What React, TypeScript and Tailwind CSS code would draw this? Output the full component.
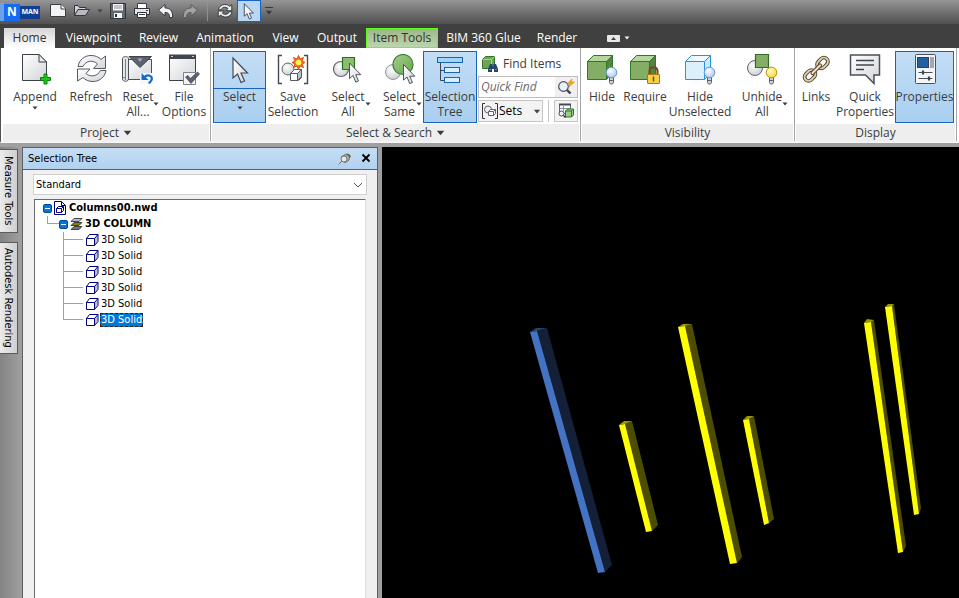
import React, { useState } from 'react';
import clsx from 'clsx';

const CURSOR = 'M0 0 V20 L4.5 16 L8 24.5 L11.5 23 L8 15 H14.5 Z';

const Caret = ({ className }: { className?: string }) => (
  <svg viewBox="0 0 6 4" className={clsx('shrink-0', className ?? 'h-1 w-1.5')} aria-hidden="true">
    <path d="M0.500 0.500h5L3 3.500z" fill="currentColor" />
  </svg>
);

const Icon = ({ children }: { children: React.ReactNode }) => (
  <svg viewBox="0 0 32 32" className="h-8 w-8 shrink-0" fill="none" aria-hidden="true">
    <defs>
      <linearGradient id="paper" x1="0" y1="0" x2="1" y2="1">
        <stop offset="0" stopColor="#ffffff" />
        <stop offset="1" stopColor="#d2d4d8" />
      </linearGradient>
      <radialGradient id="ball" cx="0.4" cy="0.35" r="0.7">
        <stop offset="0" stopColor="#ffffff" />
        <stop offset="1" stopColor="#c8ccd1" />
      </radialGradient>
      <radialGradient id="blueBulb" cx="0.4" cy="0.35" r="0.7">
        <stop offset="0" stopColor="#ffffff" />
        <stop offset="1" stopColor="#a3c6f5" />
      </radialGradient>
      <radialGradient id="yellowBulb" cx="0.4" cy="0.35" r="0.7">
        <stop offset="0" stopColor="#ffffc8" />
        <stop offset="1" stopColor="#ffd52a" />
      </radialGradient>
      <linearGradient id="green" x1="0" y1="0" x2="1" y2="1">
        <stop offset="0" stopColor="#a4d08a" />
        <stop offset="1" stopColor="#6ba452" />
      </linearGradient>
    </defs>
    {children}
  </svg>
);

const AppendIcon = () => (
  <Icon>
    <path d="M3.500 0.500H20L27.500 8V26.500H3.500Z" fill="url(#paper)" stroke="#3c4048" />
    <path d="M20 0.500V8H27.500Z" fill="#e9eaec" stroke="#3c4048" />
    <path d="M25 20h3v3.500h3.500v3H28V30h-3v-3.500h-3.500v-3H25z" fill="#1fc41f" stroke="#078007" />
  </Icon>
);

const RefreshArrows = () => (
  <>
    <path d="M3 12.500C4 6 9.500 1.500 16 1.500c4.500 0 7.500 1.500 10 4L30.500 2v12.500H18.500L22.500 10C18 5.500 11 6.500 8 12.500Z" />
    <path d="M31 16.500c-1 6.500-6.500 11-13 11-4.500 0-7.500-1.500-10-4L2.500 27V15H15l-4 4.500c4.500 4 11.500 3 14.500-3Z" />
  </>
);

const RefreshIcon = () => (
  <Icon>
    <g fill="url(#paper)" stroke="#555a63" strokeLinejoin="round"><RefreshArrows /></g>
  </Icon>
);

const ResetIcon = () => (
  <Icon>
    <path d="M5.500 5.500H29.500V25.500H5.500Z" fill="url(#paper)" stroke="#4a4f58" />
    <path d="M0.500 4.500C0.500 2 6.500 2 6.500 4.500V25C6.500 28 0.500 28 0.500 25Z" fill="#e4e6e9" stroke="#4a4f58" />
    <path d="M3.500 5V26M0.500 25c0-2 3-2 3 0" stroke="#777c85" />
    <path d="M7 2.500H29.500L18 13.500Z" fill="#5b616e" stroke="#3d424d" />
    <path d="M15.500 4.500h5L18 8z" fill="#a5a9b2" />
    <path d="M18 19h13v11H18z" fill="#f6f7f8" />
    <path d="M22 23.500c4-4 9-1.500 7.500 2.500-.5 1.500-1.500 2.500-3 3" stroke="#1769c9" strokeWidth="2.200" />
    <path d="M19.500 19v7H26.500Z" fill="#1769c9" />
  </Icon>
);

const FileOptionsIcon = () => (
  <Icon>
    <path d="M1.500 1.500H27.500V26.500H1.500Z" fill="url(#paper)" stroke="#3c4048" />
    <path d="M1 0.500H28V5H1Z" fill="#3f444e" />
    <path d="M3 2.500h2M24 2.500h2" stroke="#c9ccd2" />
    <path d="M15.500 18.500H27.500V30.500H15.500Z" fill="#f3f4f5" stroke="#7d828b" />
    <path d="M17.500 23l2.500-1.500 2.500 3L29.500 18l2 2L23 29.500Z" fill="#5b6270" stroke="#3d424d" strokeWidth="0.700" />
  </Icon>
);

const Pointer = ({ x, y, scale = 1 }: { x: number; y: number; scale?: number }) => (
  <path d={CURSOR} transform={`translate(${x} ${y}) scale(${scale})`} fill="url(#paper)" stroke="#454a55" strokeWidth="1.200" />
);

const SelectIcon = () => (
  <Icon><Pointer x={9} y={4} /></Icon>
);

const SaveSelectionIcon = () => (
  <Icon>
    <path d="M5 1.500H1.500V29.500H5M27 1.500H30.500V29.500H27" stroke="#454a55" strokeWidth="1.400" />
    <circle cx="11" cy="15" r="6" fill="url(#ball)" stroke="#60656f" />
    <path d="M13.500 19.500l4-4H24.500V23.500l-3 3H13.500Z" fill="#fff" stroke="#555a64" strokeLinejoin="round" />
    <path d="M20.500 19.500V26.500l4-4v-7Z" fill="#bfc3c9" stroke="#555a64" />
    <path d="M13.500 19.500h7l4-4" stroke="#555a64" />
    <path d="M21.500 1.500l1.500 3.500 3.500-1.500-1.500 3.500 3 1.500-3 1.500 1.500 3.500-3.500-1.500-1.500 3.500-1.500-3.500-3.500 1.500 1.500-3.500-3-1.500 3-1.500-1.500-3.500L20 5z" fill="#f4771b" stroke="#df4b12" />
    <circle cx="21.500" cy="8.500" r="2.800" fill="#fff45b" />
  </Icon>
);

const SelectAllIcon = () => (
  <Icon>
    <circle cx="9" cy="15" r="7.500" fill="url(#ball)" stroke="#60656f" strokeWidth="1.200" />
    <path d="M10.500 3.500H22.500V15.500H10.500Z" fill="#8bbd70" stroke="#2f6d23" strokeWidth="1.200" />
    <Pointer x={17.500} y={9} scale={0.78} />
  </Icon>
);

const SelectSameIcon = () => (
  <Icon>
    <circle cx="9" cy="18" r="7.500" fill="url(#ball)" stroke="#9297a0" />
    <circle cx="19" cy="10.500" r="10" fill="url(#green)" stroke="#3d8231" strokeWidth="1.200" />
    <Pointer x={19.500} y={10.500} scale={0.78} />
  </Icon>
);

const SelectionTreeIcon = () => (
  <Icon>
    <path d="M6.500 9V26.500H10M6.500 16.500H10" stroke="#3f444e" />
    <rect x="3.500" y="3.500" width="25" height="5" fill="#a4d4f4" stroke="#1667b0" />
    <rect x="10.500" y="13.500" width="15" height="5" fill="#d9eefb" stroke="#1667b0" />
    <rect x="10.500" y="23.500" width="15" height="5" fill="#d9eefb" stroke="#1667b0" />
  </Icon>
);

const Cube = ({ front, top, side, line }: { front: string; top: string; side: string; line: string }) => (
  <g stroke={line} strokeLinejoin="round">
    <path d="M1.500 7.500L7.500 1.500H26.500L20.500 7.500Z" fill={top} />
    <path d="M20.500 7.500L26.500 1.500V19.500L20.500 25.500Z" fill={side} />
    <path d="M1.500 7.500H20.500V25.500H1.500Z" fill={front} />
  </g>
);

const GreenCube = () => <Cube front="#84ae66" top="#b5d69f" side="#568343" line="#2c7a22" />;

const Bulb = ({ yellow }: { yellow?: boolean }) => (
  <g>
    <path d="M23.500 23h4v5.500l-1 1.500h-2l-1-1.500Z" fill="#d2d5da" stroke="#5c616b" />
    <path d="M23.500 26.500h4" stroke="#5c616b" />
    <circle cx="25.500" cy="18.500" r="5.300" fill={yellow ? 'url(#yellowBulb)' : 'url(#blueBulb)'} stroke={yellow ? '#b58a16' : '#6a8fc9'} />
  </g>
);

const HideIcon = () => (
  <Icon><GreenCube /><Bulb /></Icon>
);

const RequireIcon = () => (
  <Icon>
    <GreenCube />
    <path d="M20.500 21V17c0-5 8-5 8 0v4" stroke="#7a4a1c" strokeWidth="2.200" />
    <rect x="18.500" y="20.500" width="12" height="9" rx="0.500" fill="#f8cf49" stroke="#a67c0d" />
    <path d="M24.500 22.500v5" stroke="#6d4e0a" strokeWidth="1.500" />
  </Icon>
);

const HideUnselectedIcon = () => (
  <Icon>
    <Cube front="#dcf0fc" top="#f0f9ff" side="#cbe8fa" line="#2496dc" />
    <Bulb />
  </Icon>
);

const UnhideIcon = () => (
  <Icon>
    <circle cx="9" cy="14" r="7.500" fill="url(#ball)" stroke="#60656f" />
    <path d="M9.500 0.500H22.500V13.500H9.500Z" fill="#84ae66" stroke="#2f6d23" strokeWidth="1.200" />
    <Bulb yellow />
  </Icon>
);

const LinksIcon = () => (
  <Icon>
    {['translate(22.500 9)', 'translate(10 21.500)'].map((place) => (
      <g key={place} transform={`${place} rotate(-45)`}>
        <rect x="-6" y="-4" width="12" height="8" rx="4" stroke="#4f4638" strokeWidth="3.800" />
        <rect x="-6" y="-4" width="12" height="8" rx="4" stroke="#e3d0a8" strokeWidth="1.900" />
      </g>
    ))}
    <path d="M12.500 19l7.500-7.500" stroke="#4f4638" strokeWidth="4.200" strokeLinecap="round" />
    <path d="M12.500 19l7.500-7.500" stroke="#f0dfba" strokeWidth="2.200" strokeLinecap="round" />
  </Icon>
);

const QuickPropertiesIcon = () => (
  <Icon>
    <path d="M1.500 1H30.500V21H25V29.500L16.500 21H1.500Z" fill="url(#paper)" stroke="#4a5059" strokeWidth="1.500" />
    <path d="M7 6.500H25M7 11H25M7 15.500H15" stroke="#3f444e" strokeWidth="1.300" />
  </Icon>
);

const PropertiesIcon = () => (
  <Icon>
    <rect x="6.500" y="0.500" width="20" height="29" rx="1" fill="#f4f5f6" stroke="#4a4f58" />
    <rect x="8.500" y="3.500" width="11" height="10" fill="#235fa3" stroke="#313f55" />
    <path d="M21 3h4v11h-4z" fill="#a3a8b0" />
    <path d="M9.500 18.500h14M9.500 24.500h14" stroke="#4a4f58" strokeWidth="1.200" />
    <path d="M14 16.500v4M20 22.500v4" stroke="#3d424d" strokeWidth="2.200" />
  </Icon>
);

type RibbonButtonProps = {
  icon: React.ReactNode;
  label: string;
  className: string;
  active?: boolean;
  split?: boolean;
  sideCaret?: boolean;
  caret?: boolean;
};

const RibbonButton = ({ icon, label, className, active, split, sideCaret, caret }: RibbonButtonProps) => (
  <button
    type="button"
    className={clsx(
      'flex h-[72px] shrink-0 flex-col items-center border pt-0.5',
      active ? 'border-[#1464c0] bg-linear-to-b from-[#c3ddf5] to-[#a9cff0]' : 'border-transparent',
      className,
    )}
  >
    {icon}
    {split && <span className="mt-0.5 h-px w-full bg-[#1464c0]" />}
    <span className={clsx('flex items-center', !split && 'mt-[3px]')}>
      <span className="whitespace-pre text-center leading-[15px]">{label}</span>
      {sideCaret && <Caret className="-mr-1.5 h-1 w-1.5" />}
    </span>
    {caret && <Caret className="mt-0.5 h-1 w-1.5" />}
  </button>
);

const RibbonGroup = ({ title, menu, className, children }: { title: string; menu?: boolean; className: string; children: React.ReactNode }) => (
  <section className="flex shrink-0 flex-col border-r border-[#a5a5a5]" aria-label={title}>
    <div className={clsx('flex h-[76px] pt-[3px]', className)}>{children}</div>
    <div className="mx-px flex h-[17px] items-center justify-center gap-1 bg-[#eeeeee]">
      <span>{title}</span>
      {menu && <Caret className="h-1.5 w-[9px]" />}
    </div>
  </section>
);

const FindItemsIcon = () => (
  <svg viewBox="0 0 16 16" className="h-4 w-4" aria-hidden="true">
    <path d="M0.500 3.500l3-3h9v9l-3 3h-9z" fill="#6fa355" stroke="#2c7a22" />
    <path d="M0.500 3.500h9l3-3M9.500 3.500v9" fill="none" stroke="#a9d092" />
    <path d="M8 8h2.500v2h1V8H14l2 5v3h-4v-3h-2v3H6v-3z" fill="#24456e" />
    <path d="M7.500 13.500h1M13.500 13.500h1" stroke="#9cc4ec" />
  </svg>
);

const QuickFindIcon = () => (
  <svg viewBox="0 0 18 18" className="h-[18px] w-[18px]" fill="none" aria-hidden="true">
    <circle cx="6.500" cy="8.500" r="4.800" fill="#e9f1f8" stroke="#4a4f58" strokeWidth="1.200" />
    <path d="M10 12l3.500 3.500" stroke="#3d424d" strokeWidth="2.400" />
    <path d="M15 1L10.500 5.500h2.500l-1 3.500 5.500-5h-3z" fill="#f7a51c" stroke="#e08a10" strokeWidth="0.600" />
  </svg>
);

const SetsIcon = () => (
  <svg viewBox="0 0 16 16" className="h-4 w-4" fill="none" aria-hidden="true">
    <path d="M3 0.500H0.500v15H3M13 0.500h2.500v15H13" stroke="#30353e" />
    <circle cx="6" cy="6.500" r="3.500" fill="#eceef0" stroke="#60656f" />
    <path d="M6.500 8.500l2-2h5v4l-2 2h-5z" fill="#fff" stroke="#60656f" />
    <path d="M6.500 8.500h5l2-2M11.500 8.500v4" stroke="#60656f" />
  </svg>
);

const InspectorIcon = () => (
  <svg viewBox="0 0 16 16" className="h-4 w-4" fill="none" aria-hidden="true">
    <path d="M1.500 1.500h11v9h-11z" fill="#fff" stroke="#60656f" />
    <path d="M1 0.500h12v2H1z" fill="#454a55" />
    <path d="M2 5.500h11M5.500 3v5" stroke="#8a8f98" />
    <path d="M7.500 8l2-2h6v6l-2 2h-6z" fill="#9ccc84" stroke="#2c7a22" />
    <path d="M7.500 8h6l2-2M13.500 8v6" stroke="#2c7a22" />
    <circle cx="3.500" cy="10.500" r="2.500" fill="#eef2f6" stroke="#454a55" />
    <path d="M5.500 12.500l2 2" stroke="#30353e" strokeWidth="1.500" />
  </svg>
);

const QuickIcon = ({ label, className, children }: { label: string; className?: string; children: React.ReactNode }) => (
  <button type="button" aria-label={label} className={clsx('flex shrink-0 justify-center', className)}>
    <svg viewBox="0 0 16 16" className="h-4 w-4" fill="none" aria-hidden="true">{children}</svg>
  </button>
);

const TitleBar = () => (
  <header className="flex h-6 items-start bg-linear-to-b from-[#969696] to-[#505050] pt-[3px]">
    <button type="button" className="flex h-[18px] w-10 shrink-0 items-center border-l-4 border-[#6d9fea] text-white" aria-label="Application menu">
      <span className="flex h-[17px] w-4 items-center justify-center bg-[#176bf2] text-[12px] font-bold">N</span>
      <span className="flex h-[13px] w-5 items-center justify-center bg-[#123f93] text-[7px] font-bold">MAN</span>
    </button>
    <div className="ml-2.5 flex items-start">
      <QuickIcon label="New">
        <path d="M0.500 1.500H11L15.500 6V13.500H0.500Z" fill="#f2f3f4" stroke="#3a3d42" />
        <path d="M11 1.500V6h4.500" fill="#fff" stroke="#3a3d42" />
      </QuickIcon>
      <QuickIcon label="Open" className="ml-2">
        <path d="M0.500 12.500V2.500H4l1.500 2H12V6.500" fill="#cfd1d4" stroke="#32353a" />
        <path d="M0.500 12.500L4 6.500H15.500L11.500 12.500Z" fill="#b7babe" stroke="#32353a" />
      </QuickIcon>
      <button type="button" aria-label="Open options" className="mx-1 flex h-4 w-3 items-center justify-center text-[#3e3e3e]"><Caret /></button>
      <QuickIcon label="Save">
        <path d="M0.500 0.500H15.500V15.500H0.500Z" fill="#61666f" stroke="#2f333a" />
        <path d="M3 1h10v6.500H3zM4 10h8v5H4z" fill="#f4f5f6" />
        <path d="M4 3h8M4 5h8" stroke="#8c9199" />
        <path d="M5 11h2v3H5z" fill="#2f333a" />
      </QuickIcon>
      <QuickIcon label="Print" className="ml-2">
        <path d="M3.500 0.500h9v5h-9z" fill="#fff" stroke="#3a3d42" />
        <path d="M0.500 5.500h15v6h-15z" fill="#e4e6e8" stroke="#2f333a" />
        <path d="M3.500 9.500h9v5h-9z" fill="#fff" stroke="#2f333a" />
        <path d="M5 11.500h6M12 7.500h2" stroke="#3a3d42" />
      </QuickIcon>
      <QuickIcon label="Undo" className="ml-2">
        <path d="M7 1.500V5C12 5 15 7.500 14.500 14.500H11.500C11.500 10.500 10 9.500 7 9.500V13L0.500 7.200Z" fill="#f1f2f3" stroke="#34373c" />
      </QuickIcon>
      <QuickIcon label="Redo" className="ml-2">
        <path d="M9 1.500V5C4 5 1 7.500 1.500 14.500H4.500C4.500 10.500 6 9.500 9 9.500V13L15.500 7.200Z" fill="#a2a2a2" stroke="#5b5b5b" />
      </QuickIcon>
      <span className="mx-[9px] h-[18px] w-px bg-[#909090]" />
      <button type="button" aria-label="Refresh" className="flex h-4 w-4 shrink-0">
        <svg viewBox="0 0 33 30" className="h-4 w-4" aria-hidden="true">
          <g strokeWidth="2" fill="#eee" stroke="#34373c"><RefreshArrows /></g>
        </svg>
      </button>
      <button type="button" aria-label="Select" className="-mt-[3px] ml-1 flex h-[22px] w-6 items-center justify-center border border-[#1464c0] bg-[#b7d7f3]">
        <svg viewBox="-1 -1 17 27" className="h-[17px] w-3" aria-hidden="true"><path d={CURSOR} fill="#f4f5f6" stroke="#454a55" strokeWidth="1.500" /></svg>
      </button>
      <button type="button" aria-label="Customize" className="ml-1 mt-1 flex flex-col items-center gap-0.5 text-[#383838]">
        <span className="h-px w-2 bg-current" />
        <Caret className="h-[5px] w-2" />
      </button>
    </div>
  </header>
);

const tabs = [
  { label: 'Home', width: 'w-[51px] mr-0.5' },
  { label: 'Viewpoint', width: 'w-[73px]' },
  { label: 'Review', width: 'w-[57px]' },
  { label: 'Animation', width: 'w-[76px]' },
  { label: 'View', width: 'w-[45px]' },
  { label: 'Output', width: 'w-[58px]' },
  { label: 'Item Tools', width: 'w-[72px]' },
  { label: 'BIM 360 Glue', width: 'w-[91px]' },
  { label: 'Render', width: 'w-[56px]' },
];

const TabBar = () => {
  const [current, setCurrent] = useState('Home');

  return (
    <nav className="flex h-6 items-end bg-[#404040] pl-1">
      {tabs.map(({ label, width }) => (
        <button
          key={label}
          type="button"
          onClick={() => setCurrent(label)}
          className={clsx(
            'flex h-5 shrink-0 items-center justify-center whitespace-nowrap',
            width,
            label === 'Item Tools'
              ? 'border border-[#5fff1a] bg-linear-to-b from-[#9db78c] to-[#b9d6ac] text-[#333]'
              : current === label
                ? 'bg-linear-to-b from-[#d6d6d6] to-white text-[#333]'
                : 'text-white',
          )}
        >
          {label}
        </button>
      ))}
      <button type="button" aria-label="Minimize ribbon" className="ml-[22px] flex h-5 items-center gap-1 text-[#f0f0f0]">
        <svg viewBox="0 0 13 7" className="h-[7px] w-[13px]" aria-hidden="true">
          <rect width="13" height="7" rx="1" fill="#e8e8e8" />
          <path d="M4 5h5L6.500 2z" fill="#404040" />
        </svg>
        <Caret />
      </button>
    </nav>
  );
};

const Ribbon = () => (
  <div className="flex h-[95px] shrink-0 overflow-hidden border-b-2 border-l border-[#f4f4f4] border-l-[#505050] bg-white pl-px">
    <RibbonGroup title="Project" menu className="pr-1">
      <RibbonButton className="w-[66px]" icon={<AppendIcon />} label="Append" caret />
      <RibbonButton className="w-[46px]" icon={<RefreshIcon />} label="Refresh" />
      <RibbonButton className="w-12" icon={<ResetIcon />} label={'Reset\nAll...'} sideCaret />
      <RibbonButton className="w-11" icon={<FileOptionsIcon />} label={'File\nOptions'} />
    </RibbonGroup>

    <RibbonGroup title="Select & Search" menu className="px-0.5">
      <RibbonButton className="w-[53px]" icon={<SelectIcon />} label="Select" active split caret />
      <RibbonButton className="w-[54px]" icon={<SaveSelectionIcon />} label={'Save\nSelection'} />
      <RibbonButton className="w-14" icon={<SelectAllIcon />} label={'Select\nAll'} sideCaret />
      <RibbonButton className="w-[47px]" icon={<SelectSameIcon />} label={'Select\nSame'} sideCaret />
      <RibbonButton className="w-[54px]" icon={<SelectionTreeIcon />} label={'Selection\nTree'} active />
      <div className="ml-px flex w-[100px] flex-col">
        <button type="button" className="flex h-[25px] items-center gap-[5px] pl-1">
          <FindItemsIcon />
          <span className="whitespace-nowrap">Find Items</span>
        </button>
        <div className="flex h-[22px] items-center border border-[#bdbdbd] bg-white">
          <input aria-label="Quick Find" placeholder="Quick Find" className="w-0 flex-1 pl-0.5 font-medium italic outline-none placeholder:text-[#6a6a6a]" />
          <button type="button" aria-label="Find" className="flex h-full w-[22px] items-center justify-center bg-[#f0f0f0]"><QuickFindIcon /></button>
        </div>
        <div className="mt-[2px] flex h-[22px] items-stretch justify-between">
          <button type="button" className="flex w-[65px] items-center border border-[#c6c6c6] bg-[#f3f3f3] pl-[3px] text-black">
            <SetsIcon />
            <span className="flex-1 pl-px text-left">Sets</span>
            <Caret className="mr-px h-[5px] w-2 text-[#444]" />
          </button>
          <span className="w-px bg-[#c6c6c6]" />
          <button type="button" aria-label="Selection Inspector" className="flex w-6 items-center justify-center border border-[#c6c6c6] bg-[#f3f3f3]"><InspectorIcon /></button>
        </div>
      </div>
    </RibbonGroup>

    <RibbonGroup title="Visibility" className="pr-[3px]">
      <RibbonButton className="w-[42px]" icon={<HideIcon />} label="Hide" />
      <RibbonButton className="w-11" icon={<RequireIcon />} label="Require" />
      <RibbonButton className="w-[66px]" icon={<HideUnselectedIcon />} label={'Hide\nUnselected'} />
      <RibbonButton className="w-[58px]" icon={<UnhideIcon />} label={'Unhide\nAll'} sideCaret />
    </RibbonGroup>

    <RibbonGroup title="Display" className="pr-0.5">
      <RibbonButton className="w-[42px]" icon={<LinksIcon />} label="Links" />
      <RibbonButton className="mr-0.5 w-14" icon={<QuickPropertiesIcon />} label={'Quick\nProperties'} />
      <RibbonButton className="w-[59px]" icon={<PropertiesIcon />} label="Properties" active />
    </RibbonGroup>
  </div>
);

const SolidIcon = () => (
  <svg viewBox="0 0 13 12" className="h-3 w-[13px]" fill="none" aria-hidden="true">
    <path d="M8.500 4.500l3-4v7l-3 4z" fill="#c0c0c0" />
    <path d="M0.500 4.500l3-4h8.500v7l-3.500 4h-8zM0.500 4.500h8v7M8.500 4.500l3.500-4" stroke="#000080" />
  </svg>
);

const Expander = () => (
  <button type="button" aria-label="Collapse" className="flex h-[9px] w-[9px] items-center justify-center rounded-xs border border-[#064a8c] bg-[#0078d7]">
    <span className="h-px w-[5px] bg-white" />
  </button>
);

const SelectionTree = () => {
  const [selected, setSelected] = useState(5);

  return (
    <ul>
      <li className="flex h-4 items-center pl-2 font-bold">
        <Expander />
        <svg viewBox="0 0 12 14" className="ml-0.5 h-3.5 w-3" fill="none" aria-hidden="true">
          <path d="M0.500 0.500h7l4 4v9h-11z" fill="#fff" stroke="#000080" />
          <path d="M7.500 0.500v4h4M2.500 7.500l2-2h5v4l-2 2h-5zM2.500 7.500h5v4M7.500 7.500l2-2" stroke="#000080" />
        </svg>
        <span className="ml-[3px]">Columns00.nwd</span>
      </li>
      <li className="flex h-4 items-center pl-3 font-bold">
        <span className="h-2 w-3 self-start border-b border-l border-[#a0a0a0]" />
        <Expander />
        <svg viewBox="0 0 13 12" className="ml-0.5 h-3 w-[13px]" aria-hidden="true">
          <g stroke="#222" strokeWidth="0.800">
            <path d="M1 11.500l3-3h8l-3 3z" fill="#777" />
            <path d="M1 7.500l3-3h8l-3 3z" fill="#808000" />
            <path d="M1 3.500l3-3h8l-3 3z" fill="#b5b8d6" />
          </g>
        </svg>
        <span className="ml-0.5">3D COLUMN</span>
      </li>
      {[0, 1, 2, 3, 4, 5].map((n) => (
        <li key={n} className="flex h-4 items-center pl-7">
          <span className={clsx('h-4 w-5 border-[#a0a0a0]', n < 5 && 'border-l')}>
            <span className={clsx('block h-2 border-b border-[#a0a0a0]', n === 5 && 'border-l')} />
          </span>
          <button type="button" onClick={() => setSelected(n)} className="ml-[3px] flex items-center gap-px whitespace-nowrap">
            <SolidIcon />
            <span className={clsx('h-[14px] border border-dashed leading-[12px]', selected === n ? 'border-[#402010] bg-[#0078d7] text-white' : 'border-transparent')}>3D Solid</span>
          </button>
        </li>
      ))}
    </ul>
  );
};

const TreePanel = () => (
  <aside className="flex w-[356px] shrink-0 flex-col border border-b-0 border-[#5e6064] bg-[#f0f0f0] font-['DejaVu_Sans_Condensed','DejaVu_Sans',sans-serif] text-[11px] text-black">
    <div className="flex h-[22px] shrink-0 items-center border-b border-[#5e6064] bg-linear-to-b from-[#c5def5] to-[#b1d1f0] pl-[5px] pr-1.5">
      <h2 className="flex-1 pt-0.5">Selection Tree</h2>
      <button type="button" aria-label="Auto hide">
        <svg viewBox="0 0 13 12" className="h-3 w-[13px]" fill="none" aria-hidden="true">
          <path d="M0.500 11.500l4-4" stroke="#777" />
          <path d="M3 4l5-3 4 1-1 5-4 3z" fill="#a9a9a9" stroke="#777" />
          <circle cx="6" cy="6" r="3" fill="#e6e6e6" stroke="#777" />
          <path d="M9 1l3.500 3" stroke="#5c5c5c" strokeWidth="1.500" />
        </svg>
      </button>
      <button type="button" aria-label="Close" className="ml-2.5 pb-px">
        <svg viewBox="0 0 10 10" className="block h-2.5 w-2.5" aria-hidden="true"><path d="M1.500 1.500l7 7M8.500 1.500l-7 7" stroke="#000" strokeWidth="1.800" /></svg>
      </button>
    </div>
    <div className="relative mx-2.5 mt-1">
      <select aria-label="Tree view" defaultValue="Standard" className="block h-[21px] w-full appearance-none border border-[#cfcfcf] bg-white pl-0.5 pt-px outline-none">
        <option>Standard</option>
        <option>Compact</option>
        <option>Properties</option>
        <option>Sets</option>
      </select>
      <svg viewBox="0 0 10 6" className="pointer-events-none absolute right-1 top-2 h-1.5 w-2.5" fill="none" aria-hidden="true"><path d="M1 1l4 4 4-4" stroke="#555" /></svg>
    </div>
    <div className="mx-[11px] mt-1 flex-1 border border-b-0 border-[#dcdcdc] border-l-[#6a6a6a] border-t-[#6a6a6a] bg-white">
      <SelectionTree />
    </div>
  </aside>
);

const columns = [
  { front: '530,332 537,331 605,572 598,573', side: '537,331 547,328 612,565 605,572', top: '530,332 536,328 547,328 537,331', colors: ['#4573c4', '#141f38', '#26406f'] },
  { front: '619,425 625,424 652,531 646,532', side: '625,424 632,421 658,525 652,531', top: '619,425 624,421 632,421 625,424', colors: ['#ffff00', '#4d4d00', '#999900'] },
  { front: '678,327 685,326 737,563 730,564', side: '685,326 692,324 742,557 737,563', top: '678,327 683,324 692,324 685,326', colors: ['#ffff00', '#4d4d00', '#999900'] },
  { front: '743,420 749,419 769,523 764,525', side: '749,419 754,416 774,519 769,523', top: '743,420 747,416 754,416 749,419', colors: ['#ffff00', '#4d4d00', '#999900'] },
  { front: '864,323 871,322 903,552 898,553', side: '871,322 874,320 906,546 903,552', top: '864,323 867,319 874,320 871,322', colors: ['#ffff00', '#4d4d00', '#999900'] },
  { front: '885,307 892,306 919,514 914,515', side: '892,306 894,304 921,508 919,514', top: '885,307 888,304 894,304 892,306', colors: ['#ffff00', '#4d4d00', '#999900'] },
];

const Viewport = () => (
  <main className="min-w-0 flex-1 bg-black">
    <svg viewBox="382 147 577 451" preserveAspectRatio="xMinYMin meet" className="w-full" role="img" aria-label="3D model view">
      {columns.map(({ front, side, top, colors }) => (
        <g key={front}>
          <polygon points={side} fill={colors[1]} />
          <polygon points={top} fill={colors[2]} />
          <polygon points={front} fill={colors[0]} />
        </g>
      ))}
    </svg>
  </main>
);

const DockTab = ({ label, className }: { label: string; className: string }) => (
  <button type="button" className={clsx("flex w-[18px] items-center justify-center whitespace-nowrap border border-l-0 border-[#5c5c5c] bg-linear-to-r from-[#ebebeb] to-[#cfcfcf] pr-0.5 font-['DejaVu_Sans_Condensed','DejaVu_Sans',sans-serif] text-[11px] text-black [writing-mode:vertical-rl]", className)}>
    {label}
  </button>
);

const App = () => (
  <div className="flex h-screen flex-col overflow-hidden bg-[#a0a0a0] font-['Open_Sans','Noto_Sans',sans-serif] text-[12px] text-[#3c3c3c]">
    <TitleBar />
    <TabBar />
    <Ribbon />
    <div className="flex min-h-0 flex-1 pt-1">
      <div className="flex w-[22px] shrink-0 flex-col gap-[9px] bg-linear-to-r from-[#848484] to-[#a0a0a0] pt-0.5">
        <DockTab label="Measure Tools" className="h-[84px]" />
        <DockTab label="Autodesk Rendering" className="h-28" />
      </div>
      <TreePanel />
      <div className="w-1 shrink-0" />
      <Viewport />
    </div>
  </div>
);

export default App;
